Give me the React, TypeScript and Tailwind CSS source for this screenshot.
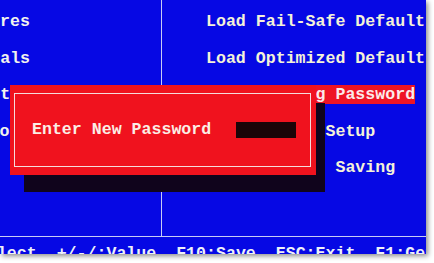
const leftItems = [
  { label: "Advanced Chipset Features", shift: "-ml-[219px]" },
  { label: "Integrated Peripherals", shift: "-ml-[189px]" },
  { label: "Power Management Setup", shift: "-ml-[189px]" },
  { label: "PnP/PCI Configurations", shift: "-ml-[90px]" },
  { label: "PC Health Status", shift: "-ml-[200px]" },
]

const rightItems = [
  { label: "Load Fail-Safe Defaults", active: false },
  { label: "Load Optimized Defaults", active: false },
  { label: "Set Changing Password", active: true },
  { label: "Save & Exit Setup", active: false },
  { label: "Exit Without Saving", active: false },
]

export default function App() {
  return (
    <div className="w-[434px] h-[263px] bg-white overflow-hidden">
      {/* BIOS screen */}
      <div className="relative w-[426px] h-[254px] bg-[#0608e4] overflow-hidden shadow-[2px_2px_5px_rgba(0,0,0,0.45)] font-['Liberation_Mono',monospace] font-bold text-[16.6px] leading-[16px] whitespace-pre">
        <div className="flex h-[237px] border-b-[1.5px] border-[#c8ccf4]">
          <div className="w-[162px] shrink-0 border-r-[1.5px] border-[#c8ccf4] overflow-hidden flex flex-col pt-[14px] gap-[20.5px] text-[#f2f2ee]">
            {leftItems.map((item) => (
              <div key={item.label} className={`h-[16px] ${item.shift}`}>
                {item.label}
              </div>
            ))}
          </div>
          <div className="flex-1 flex flex-col pt-[14px] pl-[44px] gap-[20.5px] text-[#f4f2d8]">
            {rightItems.map((item) => (
              <div key={item.label} className="h-[16px]">
                <span className={item.active ? "bg-[#ee1424] text-[#fbeaea]" : ""}>{item.label}</span>
              </div>
            ))}
          </div>
        </div>
        <div className="pt-[9px] -ml-[23px] text-[#eef0f8]">
          {"Select  +/-/:Value  F10:Save  ESC:Exit  F1:General Help"}
        </div>

        {/* dialog shadow */}
        <div className="absolute left-[24px] top-[103px] w-[301px] h-[89px] bg-[#10041c]" />

        {/* password dialog */}
        <div className="absolute left-[10px] top-[85px] w-[306px] h-[90px] bg-[#f0121e] pt-[8px] pr-[5px] pb-[8px] pl-[4px]">
          <div className="h-full border-[1.5px] border-[#f6dcdc] flex items-center pl-[17px] gap-[25px]">
            <span className="text-[#fbeee6]">Enter New Password</span>
            <div className="w-[60px] h-[16px] bg-[#1c0408]" />
          </div>
        </div>
      </div>
    </div>
  )
}
